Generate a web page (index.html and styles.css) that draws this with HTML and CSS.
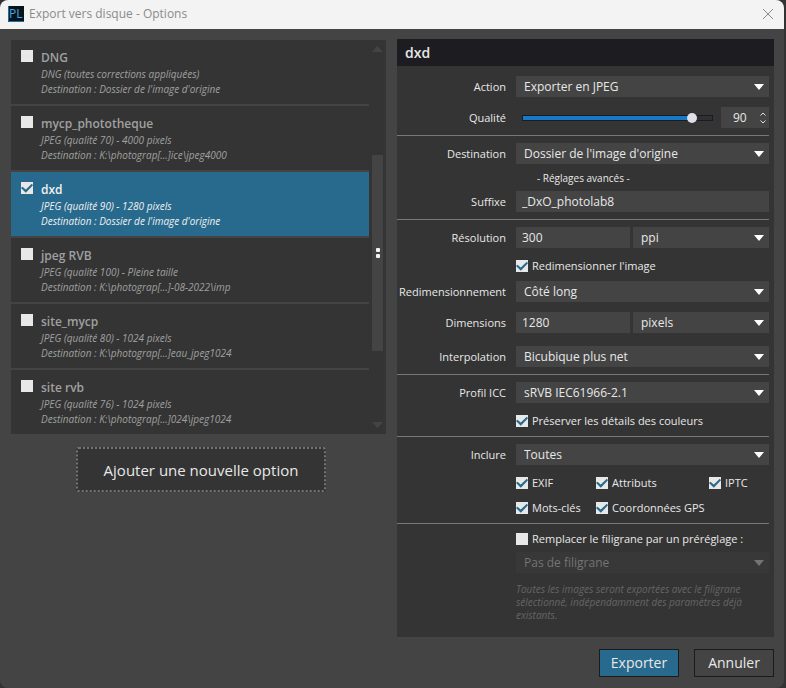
FILE: index.html
```html
<!DOCTYPE html>
<html lang="fr">
<head>
<meta charset="utf-8">
<title>Export vers disque - Options</title>
<link rel="stylesheet" href="styles.css">
</head>
<body>
<div class="window">
  <header class="titlebar">
    <svg class="logo" viewBox="0 0 16 16" aria-hidden="true"><rect width="16" height="16" fill="#071420"/><path d="M.5 0v15.500H16" fill="none" stroke="#1c6f9e"/><text x="1" y="12">PL</text></svg>
    <h1>Export vers disque - Options</h1>
    <button class="close" type="button" aria-label="Fermer"><svg viewBox="0 0 12 12"><path d="M1 1l10 10M11 1L1 11"/></svg></button>
  </header>

  <main class="content">
    <section class="presets">
      <div class="preset-panel">
        <ul class="preset-list">
          <li class="preset"><input type="checkbox" id="p1"><label for="p1"><strong>DNG</strong><em>DNG (toutes corrections appliquées)</em><em>Destination : Dossier de l'image d'origine</em></label></li>
          <li class="preset"><input type="checkbox" id="p2"><label for="p2"><strong>mycp_phototheque</strong><em>JPEG (qualité 70) - 4000 pixels</em><em>Destination : K:\photograp[...]ice\jpeg4000</em></label></li>
          <li class="preset selected"><input type="checkbox" id="p3" checked><label for="p3"><strong>dxd</strong><em>JPEG (qualité 90) - 1280 pixels</em><em>Destination : Dossier de l'image d'origine</em></label></li>
          <li class="preset"><input type="checkbox" id="p4"><label for="p4"><strong>jpeg RVB</strong><em>JPEG (qualité 100) - Pleine taille</em><em>Destination : K:\photograp[...]-08-2022\imp</em></label></li>
          <li class="preset"><input type="checkbox" id="p5"><label for="p5"><strong>site_mycp</strong><em>JPEG (qualité 80) - 1024 pixels</em><em>Destination : K:\photograp[...]eau_jpeg1024</em></label></li>
          <li class="preset"><input type="checkbox" id="p6"><label for="p6"><strong>site rvb</strong><em>JPEG (qualité 76) - 1024 pixels</em><em>Destination : K:\photograp[...]024\jpeg1024</em></label></li>
        </ul>
        <div class="scrollbar">
          <svg viewBox="0 0 11 6"><path d="M0 6L5.500 0 11 6z"/></svg>
          <div class="track"><div class="thumb"></div></div>
          <svg viewBox="0 0 11 6"><path d="M0 0h11L5.500 6z"/></svg>
        </div>
        <svg class="grip" viewBox="0 0 4 10" aria-hidden="true"><rect width="4" height="4" rx="1"/><rect y="6" width="4" height="4" rx="1"/></svg>
      </div>
      <button class="add" type="button">Ajouter une nouvelle option</button>
    </section>

    <section class="details">
      <form class="form">
        <h2>dxd</h2>
        <div class="group">
          <div class="row"><label for="action">Action</label><span class="select"><select id="action"><option>Exporter en JPEG</option></select></span></div>
          <div class="row"><label for="quality">Qualité</label>
            <div class="quality">
              <input type="range" id="quality" min="0" max="98" value="90">
              <span class="spin"><input type="text" value="90" aria-label="Valeur de qualité"><svg viewBox="0 0 6 12" aria-hidden="true"><path d="M.5 3.500L3 1l2.500 2.500M.5 8.500L3 11l2.500-2.500"/></svg></span>
            </div>
          </div>
        </div>
        <div class="group">
          <div class="row"><label for="dest">Destination</label><span class="select"><select id="dest"><option>Dossier de l'image d'origine</option></select></span></div>
          <button class="advanced" type="button">- Réglages avancés -</button>
          <div class="row tight"><label for="suffix">Suffixe</label><input type="text" id="suffix" value="_DxO_photolab8"></div>
        </div>
        <div class="group">
          <div class="row"><label for="res">Résolution</label>
            <div class="pair"><input type="text" id="res" value="300"><span class="select"><select aria-label="Unité de résolution"><option>ppi</option></select></span></div></div>
          <div class="row"><span class="check"><input type="checkbox" id="resize" checked><label for="resize">Redimensionner l'image</label></span></div>
          <div class="row near"><label for="mode">Redimensionnement</label><span class="select"><select id="mode"><option>Côté long</option></select></span></div>
          <div class="row"><label for="dim">Dimensions</label>
            <div class="pair"><input type="text" id="dim" value="1280"><span class="select"><select aria-label="Unité de dimension"><option>pixels</option></select></span></div></div>
          <div class="row far"><label for="interp">Interpolation</label><span class="select"><select id="interp"><option>Bicubique plus net</option></select></span></div>
        </div>
        <div class="group">
          <div class="row"><label for="icc">Profil ICC</label><span class="select"><select id="icc"><option>sRVB IEC61966-2.1</option></select></span></div>
          <div class="row"><span class="check"><input type="checkbox" id="colors" checked><label for="colors">Préserver les détails des couleurs</label></span></div>
        </div>
        <div class="group">
          <div class="row"><label for="include">Inclure</label><span class="select"><select id="include"><option>Toutes</option></select></span></div>
          <div class="row">
            <div class="metadata">
              <span class="check"><input type="checkbox" id="exif" checked><label for="exif">EXIF</label></span>
              <span class="check"><input type="checkbox" id="attr" checked><label for="attr">Attributs</label></span>
              <span class="check"><input type="checkbox" id="iptc" checked><label for="iptc">IPTC</label></span>
              <span class="check"><input type="checkbox" id="keys" checked><label for="keys">Mots-clés</label></span>
              <span class="check gps"><input type="checkbox" id="gps" checked><label for="gps">Coordonnées GPS</label></span>
            </div>
          </div>
        </div>
        <div class="group">
          <div class="row"><span class="check"><input type="checkbox" id="wm"><label for="wm">Remplacer le filigrane par un préréglage :</label></span></div>
          <div class="row tight"><span class="select disabled"><select disabled aria-label="Filigrane"><option>Pas de filigrane</option></select></span></div>
          <div class="row"><p class="note">Toutes les images seront exportées avec le filigrane sélectionné, indépendamment des paramètres déjà existants.</p></div>
        </div>
      </form>
      <footer class="actions">
        <button class="primary" type="button">Exporter</button>
        <button type="button">Annuler</button>
      </footer>
    </section>
  </main>
</div>
</body>
</html>
```
FILE: styles.css
```css
* { box-sizing: border-box; }

body {
  margin: 0;
  background: #333;
  color: #e8e8e8;
  font: 12px/16px "Open Sans", "Noto Sans", sans-serif;
}

h1, h2, p, ul { margin: 0; padding: 0; }
button, input, select { font: inherit; color: inherit; }

.window {
  min-height: 100vh;
  margin-right: 2px;
  background: #444;
  border-radius: 8px;
  overflow: hidden;
}

.titlebar {
  display: flex;
  align-items: center;
  gap: 5px;
  height: 29px;
  padding: 0 8px 2px;
  background: #f3f3f3;
}
.titlebar h1 { flex: 1; color: #8b8b8b; font-size: 12px; font-weight: 400; }
.logo { width: 16px; height: 16px; }
.logo text { fill: #4aa9dc; font-size: 12px; }
.close { display: flex; padding: 0; border: 0; background: none; margin-right: 2px; }
.close svg { width: 12px; height: 12px; fill: none; stroke: #8b8b8b; }

.content {
  display: grid;
  grid-template-columns: minmax(0, 375fr) minmax(0, 377fr);
  gap: 11px;
  padding: 10px 10px 10px 11px;
}

.preset-panel {
  position: relative;
  display: flex;
  gap: 3px;
  margin-top: 1px;
  padding-right: 3px;
  background: #343434;
}
.preset-list { flex: 1; list-style: none; }
.preset {
  display: flex;
  gap: 8px;
  height: 66px;
  padding: 10px 10px 0;
  border-bottom: 2px solid #444;
  color: #a0a0a0;
}
.preset:last-child { height: 64px; border-bottom: 0; }
.preset strong { display: block; margin-bottom: 1px; font-weight: 600; }
.preset em { display: block; font-size: 10px; line-height: 15px; }
.preset.selected { background: #286a8d; color: #f0f0f0; }

.scrollbar {
  display: flex;
  flex-direction: column;
  width: 11px;
  padding: 6px 0;
}
.scrollbar svg { width: 11px; height: 6px; fill: #444; }
.track { flex: 1; padding-top: 103px; }
.thumb { height: 196px; background: #444; }
.grip {
  position: absolute;
  top: 208px;
  right: 6px;
  width: 4px;
  height: 10px;
  fill: #f4f4f4;
}

.add {
  display: block;
  width: 250px;
  height: 45px;
  margin: 13px auto 0 65px;
  border: 2px dotted #747474;
  border-radius: 3px;
  background: #343434;
  font-size: 15px;
}

.form { padding-bottom: 7px; background: #343434; }
.form h2 {
  padding: 4px 8px 3px;
  background: #1d1c21;
  font-size: 14px;
  font-weight: 600;
  line-height: 20px;
}

.group {
  margin-right: 5px;
  padding: 7px 0;
  border-bottom: 1px solid #777;
}
.form h2 + .group { padding-top: 10px; }
.group:last-child { padding-bottom: 8px; border-bottom: 0; }

.row {
  display: grid;
  grid-template-columns: 109px minmax(0, 1fr);
  column-gap: 10px;
  align-items: center;
}
.row > * { grid-column: 2; }
.row > label { grid-column: 1; justify-self: end; white-space: nowrap; }
.row label { font-size: 11px; }
.row + .row { margin-top: 10px; }
.row.tight, .row + .row.tight { margin-top: 5px; }
.row + .row.near { margin-top: 7px; }
.row + .row.far { margin-top: 13px; }

.select { position: relative; display: block; }
.select::after {
  content: "";
  position: absolute;
  top: 8px;
  right: 5px;
  width: 10px;
  height: 6px;
  background: #fff;
  clip-path: polygon(0 0, 100% 0, 50% 100%);
  pointer-events: none;
}
select, input[type="text"] {
  display: block;
  appearance: none;
  width: 100%;
  height: 21px;
  margin: 0;
  border: 0;
  border-radius: 0;
  background: #444;
  line-height: 21px;
}
select { padding: 0 20px 0 8px; }
input[type="text"] { padding: 0 6px; }
.disabled select { background: #383838; color: #747474; opacity: 1; }
.disabled::after { background: #747474; }

.pair { display: grid; grid-template-columns: 114fr 136fr; gap: 3px; }

.quality { display: flex; align-items: center; gap: 8px; padding-left: 6px; }
.quality input[type="range"] {
  appearance: none;
  flex: 1;
  min-width: 0;
  height: 12px;
  margin: 0;
  background: none;
}
.quality input[type="range"]::-webkit-slider-runnable-track {
  height: 6px;
  border: 1px solid #1b1b22;
  background: linear-gradient(to right, #1879c8 90%, #303033 90%);
}
.quality input[type="range"]::-webkit-slider-thumb {
  appearance: none;
  width: 10px;
  height: 10px;
  margin-top: -3px;
  border-radius: 50%;
  background: #e0dfe6;
}
.spin { display: flex; align-items: center; width: 48px; padding-right: 3px; background: #444; }
.spin input[type="text"] { flex: 1; min-width: 0; padding: 0 0 0 12px; }
.spin svg { width: 6px; height: 12px; fill: none; stroke: #e0e0e0; }

input[type="checkbox"] {
  appearance: none;
  flex: none;
  width: 12px;
  height: 12px;
  margin: 0;
  background: #e8e8e8;
}
input[type="checkbox"]:checked::before {
  content: "";
  display: block;
  width: 12px;
  height: 12px;
  background: #286a8d;
  clip-path: polygon(0 50%, 12% 40%, 40% 62%, 90% 14%, 100% 28%, 40% 90%);
}
.check { display: flex; align-items: center; gap: 4px; white-space: nowrap; }
.metadata { display: grid; grid-template-columns: 80px 113px 1fr; row-gap: 9px; }
.gps { grid-column: span 2; }

.advanced {
  display: block;
  margin: 7px 0 0 140px;
  padding: 0;
  border: 0;
  background: none;
  font-size: 10px;
  line-height: 15px;
}
.note { color: #656565; font-size: 10px; font-style: italic; line-height: 13px; }

.actions { display: flex; justify-content: flex-end; gap: 15px; margin-top: 12px; }
.actions button {
  width: 80px;
  height: 28px;
  padding: 0;
  border: 1px solid #1b1b1b;
  background: #444;
  font-size: 14px;
}
.actions .primary { background: #286a8d; }
```
